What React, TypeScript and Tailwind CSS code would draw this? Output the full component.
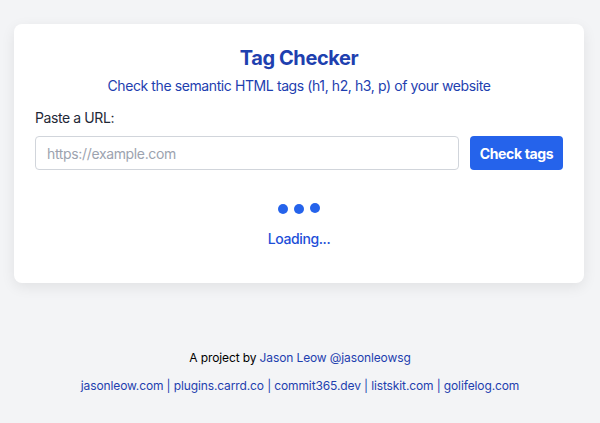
import React from "react";

export default function App() {
  return (
    <div className="min-h-screen w-full bg-[#f3f4f6] pt-6 font-['Inter',sans-serif] tracking-[-0.025em]">
      <div className="ml-[14px] w-[570px] rounded-lg bg-white px-[21px] pt-5 pb-[34px] shadow-[0_4px_14px_rgba(0,0,0,0.08)]">
        <h1 className="text-center text-[20px] font-bold leading-7 text-[#1e40af]">Tag Checker</h1>
        <p className="mt-1 text-center text-[14px] leading-5 text-[#1e40af]">
          Check the semantic HTML tags (h1, h2, h3, p) of your website
        </p>
        <label className="mt-3 block text-[14px] leading-5 text-[#1f2937]">Paste a URL:</label>
        <div className="mt-2 flex gap-[11px]">
          <input
            className="h-[34px] flex-1 rounded border border-[#d1d5db] px-[11px] text-[14px] tracking-[-0.025em] text-[#1f2937] outline-none placeholder:text-[#9ca3af]"
            placeholder="https://example.com"
          />
          <button className="h-[34px] w-[93px] rounded bg-[#2563eb] text-[14px] font-bold tracking-[-0.025em] text-white">
            Check tags
          </button>
        </div>
        <div className="mt-8 flex flex-col items-center">
          <div className="flex h-[12px] items-end gap-[6px]">
            <span className="h-[10px] w-[10px] rounded-full bg-[#2563eb]"></span>
            <span className="h-[10px] w-[10px] rounded-full bg-[#2563eb]"></span>
            <span className="mb-[1px] h-[10px] w-[10px] rounded-full bg-[#2563eb]"></span>
          </div>
          <p className="mt-[15px] text-[14px] font-medium leading-5 text-[#1d4ed8]">Loading...</p>
        </div>
      </div>
      <div className="mt-[67px] text-center text-[12px] leading-4 tracking-[-0.01em]">
        <p className="text-black">
          A project by <a className="text-[#1e40af]">Jason Leow @jasonleowsg</a>
        </p>
        <p className="mt-3 text-[#1e40af]">
          jasonleow.com | plugins.carrd.co | commit365.dev | listskit.com | golifelog.com
        </p>
      </div>
    </div>
  );
}
